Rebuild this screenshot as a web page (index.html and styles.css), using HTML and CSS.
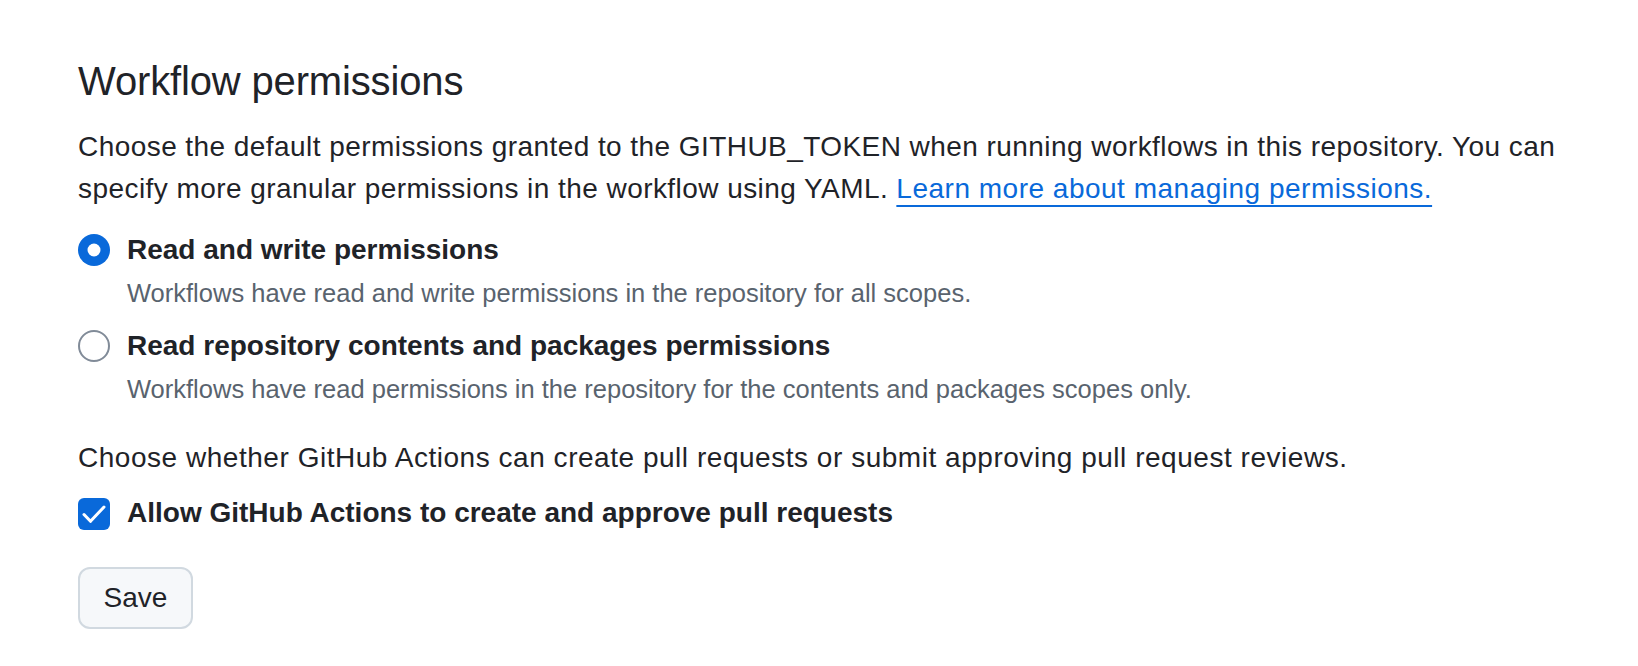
FILE: index.html
```html
<!DOCTYPE html>
<html lang="en">
<head>
    <meta charset="UTF-8">
    <title>Workflow permissions</title>
    <link rel="stylesheet" href="styles.css">
</head>
<body>
    <!-- Workflow permissions -->
    <div class="settings">
        <h2 class="subhead">Workflow permissions</h2>
        <p class="desc">
            Choose the default permissions granted to the GITHUB_TOKEN when running workflows in this repository. You can
            specify more granular permissions in the workflow using YAML.
            <a href="#" class="link">Learn more about managing permissions.</a>
        </p>

        <div class="option first-option">
            <svg class="radio" viewBox="0 0 32 32" width="32" height="32">
                <circle cx="16" cy="16" r="16" fill="#0969da"/>
                <circle cx="16" cy="16" r="6.5" fill="#ffffff"/>
            </svg>
            <div class="option-text">
                <div class="option-title">Read and write permissions</div>
                <div class="note">Workflows have read and write permissions in the repository for all scopes.</div>
            </div>
        </div>

        <div class="option">
            <svg class="radio" viewBox="0 0 32 32" width="32" height="32">
                <circle cx="16" cy="16" r="15" fill="#ffffff" stroke="#818b98" stroke-width="2"/>
            </svg>
            <div class="option-text">
                <div class="option-title">Read repository contents and packages permissions</div>
                <div class="note">Workflows have read permissions in the repository for the contents and packages scopes only.</div>
            </div>
        </div>

        <p class="desc desc-second">Choose whether GitHub Actions can create pull requests or submit approving pull request reviews.</p>

        <div class="option checkbox-option">
            <span class="checkbox">
                <svg viewBox="0 0 32 32" width="32" height="32"><path d="M6 16.5l6.5 6.8L26 9" fill="none" stroke="#ffffff" stroke-width="3" stroke-linecap="round" stroke-linejoin="round"/></svg>
            </span>
            <div class="option-title">Allow GitHub Actions to create and approve pull requests</div>
        </div>

        <button class="btn">Save</button>
    </div>
</body>
</html>
```

FILE: styles.css
```css
/* Page */
body {
    margin: 0;
    background-color: #ffffff;
    color: #1f2328;
    font-family: "Liberation Sans", Arial, sans-serif;
}

.settings {
    padding: 56px 78px 0 78px;
    width: 1480px;
}

.subhead {
    font-size: 40px;
    font-weight: 400;
    line-height: 50px;
    letter-spacing: -0.15px;
    margin: 0 0 20px 0;
}

.desc {
    font-size: 28px;
    line-height: 42px;
    letter-spacing: 0.44px;
    margin: 0;
}

.desc-second {
    margin-top: 30px;
    letter-spacing: 0.53px;
}

.link {
    color: #0969da;
    letter-spacing: 0.5px;
    text-decoration: underline;
    text-underline-offset: 7px;
    text-decoration-thickness: 2px;
}

/* Radio and checkbox rows */
.option {
    display: flex;
    align-items: flex-start;
    gap: 17px;
    margin-top: 14px;
}

.first-option {
    margin-top: 19px;
}

.checkbox-option {
    margin-top: 13px;
}

.option-text {
    display: flex;
    flex-direction: column;
}

.option-title {
    font-size: 28px;
    font-weight: 700;
    line-height: 42px;
}

.note {
    font-size: 25.5px;
    line-height: 36px;
    margin-top: 4px;
    color: #59636e;
}

.radio {
    flex: none;
    margin-top: 5px;
}

.checkbox {
    flex: none;
    width: 32px;
    height: 32px;
    margin-top: 6px;
    border-radius: 6px;
    background-color: #0969da;
    display: flex;
}

/* Save button */
.btn {
    display: block;
    margin-top: 33px;
    box-sizing: border-box;
    width: 115px;
    height: 62px;
    padding: 0;
    font-family: inherit;
    font-size: 28px;
    font-weight: 500;
    color: #1f2328;
    background-color: #f6f8fa;
    border: 2px solid #d1d9e0;
    border-radius: 12px;
    cursor: pointer;
}
```
